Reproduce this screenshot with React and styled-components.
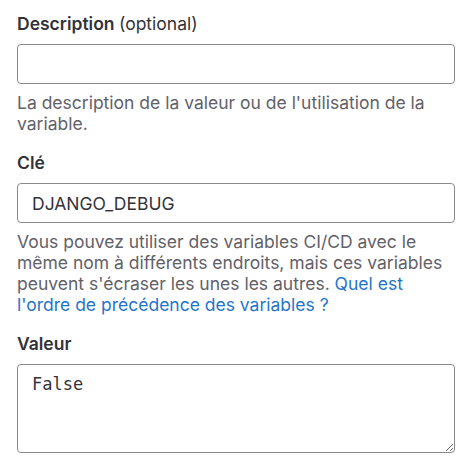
import React from 'react';
import styled, { createGlobalStyle } from 'styled-components';

const GlobalStyle = createGlobalStyle`
  body {
    margin: 0;
    background: #ffffff;
    font-family: Inter, "Noto Sans", sans-serif;
    color: #333238;
  }
`;

const Form = styled.form`
  width: 438px;
  padding: 11px 17px 0;
`;

const FieldGroup = styled.div`
  margin-bottom: 16px;
`;

const Label = styled.label`
  display: block;
  font-size: 17.5px;
  line-height: 25px;
  font-weight: 600;
  color: #333238;
  margin-bottom: 8px;
`;

const Optional = styled.span`
  font-weight: 400;
`;

const TextInput = styled.input`
  box-sizing: border-box;
  display: block;
  width: 100%;
  height: 40px;
  padding: 0 14px;
  border: 1px solid #89888d;
  border-radius: 4px;
  font-family: Inter, "Noto Sans", sans-serif;
  font-size: 17.5px;
  color: #333238;
  background: #fff;
  outline: none;
`;

const TextArea = styled.textarea`
  box-sizing: border-box;
  display: block;
  width: 100%;
  height: 89px;
  padding: 8px 14px;
  border: 1px solid #89888d;
  border-radius: 4px;
  font-family: "DejaVu Sans Mono", "Liberation Mono", monospace;
  font-size: 17px;
  line-height: 22px;
  color: #333238;
  background: #fff;
  resize: vertical;
  outline: none;
`;

const Help = styled.p`
  margin: 8px 0 0;
  font-size: 17.5px;
  line-height: 21px;
  color: #626168;
`;

const HelpLink = styled.a`
  color: #1f75cb;
  text-decoration: none;
`;

export default function App() {
  return (
    <>
      <GlobalStyle />
      <Form onSubmit={(e) => e.preventDefault()}>
        <FieldGroup>
          <Label htmlFor="description">
            Description <Optional>(optional)</Optional>
          </Label>
          <TextInput id="description" type="text" defaultValue="" />
          <Help>La description de la valeur ou de l'utilisation de la variable.</Help>
        </FieldGroup>
        <FieldGroup>
          <Label htmlFor="key">Clé</Label>
          <TextInput id="key" type="text" defaultValue="DJANGO_DEBUG" />
          <Help>
            Vous pouvez utiliser des variables CI/CD avec le même nom à différents endroits,
            mais ces variables peuvent s'écraser les unes les autres.{' '}
            <HelpLink href="#">Quel est l'ordre de précédence des variables ?</HelpLink>
          </Help>
        </FieldGroup>
        <FieldGroup>
          <Label htmlFor="value">Valeur</Label>
          <TextArea id="value" defaultValue="False" />
        </FieldGroup>
      </Form>
    </>
  );
}
